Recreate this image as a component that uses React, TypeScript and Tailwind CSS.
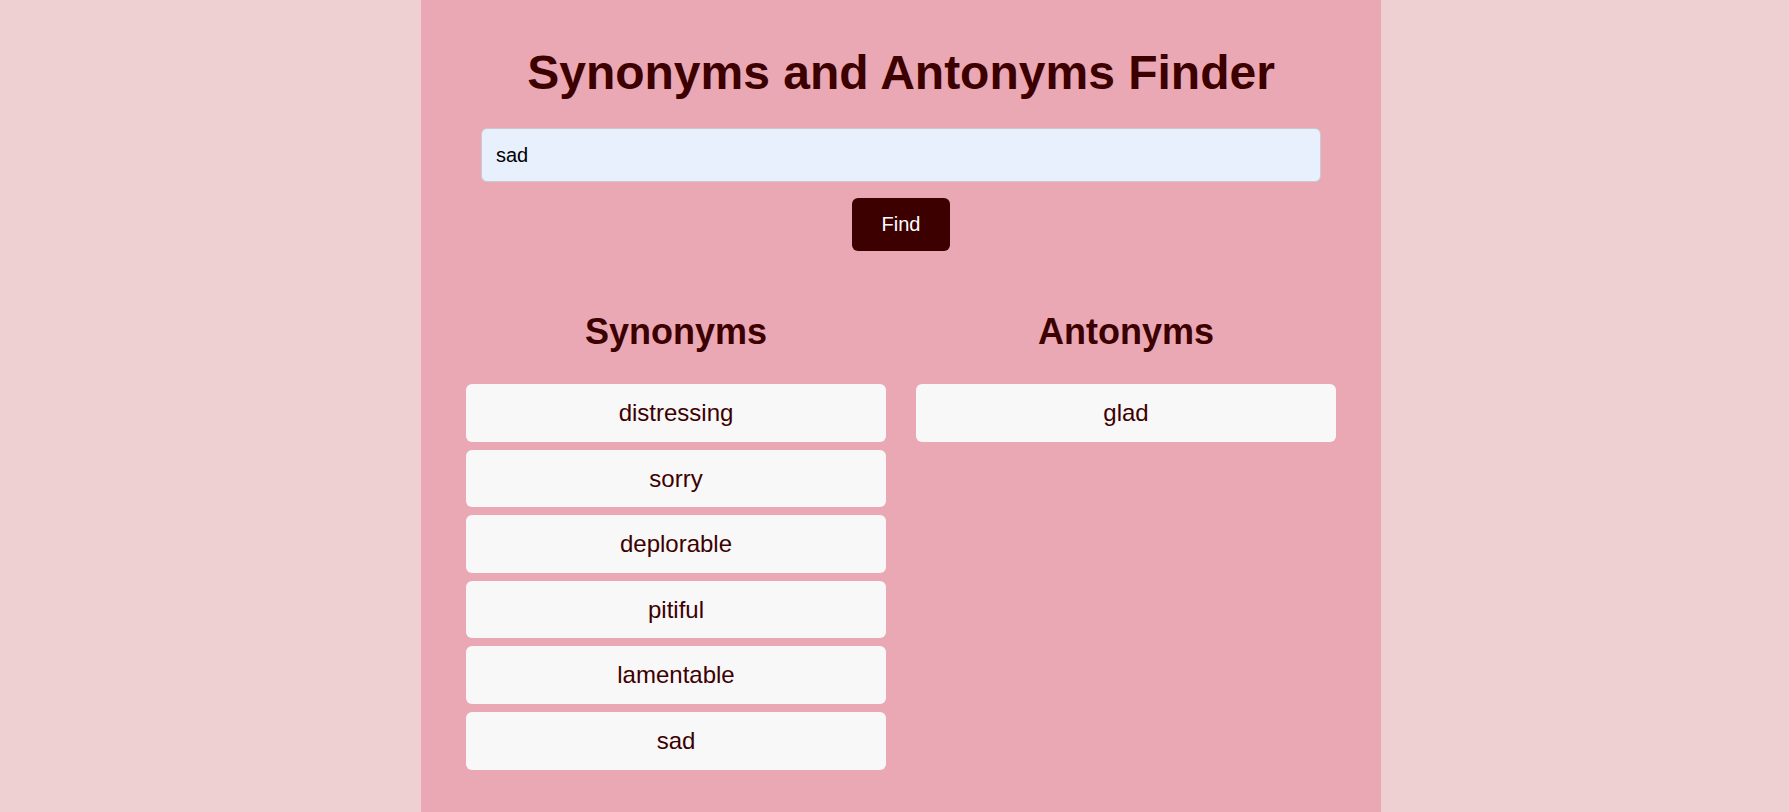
import { useState } from "react";

const synonyms = ["distressing", "sorry", "deplorable", "pitiful", "lamentable", "sad"];
const antonyms = ["glad"];

const WordList = ({ title, words }: { title: string; words: string[] }) => (
  <div className="flex flex-col">
    <h2 className="text-[36px] leading-[41px] font-bold text-center text-[#3d0000]">{title}</h2>
    <ul className="mt-[32px] flex flex-col gap-[8px]">
      {words.map((w) => (
        <li
          key={w}
          className="bg-[#f8f8f8] rounded-[6px] py-[15px] text-center text-[24px] leading-[27.6px] text-[#3d0000]"
        >
          {w}
        </li>
      ))}
    </ul>
  </div>
);

export default function App() {
  const [word, setWord] = useState("sad");

  return (
    <div
      className="min-h-screen w-full bg-[#efd0d2] flex justify-center pl-[13px]"
      style={{ fontFamily: '"Liberation Sans", Arial, sans-serif' }}
    >
      <div className="w-[960px] min-h-screen bg-[#e9a8b3] pt-[45px] pb-[40px] px-[45px]">
        <h1 className="text-[48px] leading-[55px] font-bold text-center text-[#3d0000]">
          Synonyms and Antonyms Finder
        </h1>
        <div className="px-[15px] mt-[28px]">
          <input
            value={word}
            onChange={(e) => setWord(e.target.value)}
            className="w-full h-[54px] bg-[#e8f0fe] border border-[#c9c9cf] rounded-[6px] px-[14px] text-[20px] text-black outline-none"
          />
        </div>
        <div className="flex justify-center mt-[16px]">
          <button className="bg-[#3d0000] text-white text-[20px] leading-[23px] px-[30px] py-[15px] rounded-[6px]">
            Find
          </button>
        </div>
        <div className="grid grid-cols-2 gap-[30px] mt-[60px]">
          <WordList title="Synonyms" words={synonyms} />
          <WordList title="Antonyms" words={antonyms} />
        </div>
      </div>
    </div>
  );
}
